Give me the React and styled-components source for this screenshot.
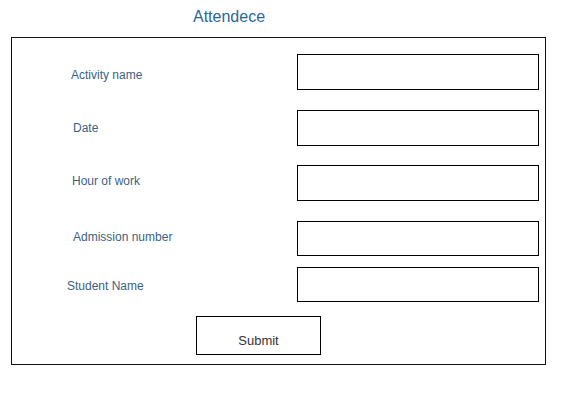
import React from 'react';
import styled, { createGlobalStyle } from 'styled-components';

const GlobalStyle = createGlobalStyle`
  body {
    margin: 0;
    background: #fff;
    font-family: "Liberation Sans", Arial, sans-serif;
  }
`;

const Page = styled.div`
  padding-left: 11px;
  width: 571px;
  height: 412px;
  box-sizing: border-box;
`;

const Title = styled.h1`
  margin: 8px 0 11px;
  padding-left: 182px;
  font-size: 16px;
  line-height: 18px;
  font-weight: normal;
  color: #2b6699;
`;

const Frame = styled.form`
  width: 535px;
  height: 328px;
  box-sizing: border-box;
  border: 1px solid #111;
  padding-top: 16px;
  display: flex;
  flex-direction: column;
`;

const Row = styled.div`
  display: flex;
  align-items: flex-start;
  margin-top: ${props => props.$gap}px;
`;

const Label = styled.label`
  width: 285px;
  box-sizing: border-box;
  padding-left: ${props => props.$x}px;
  padding-top: ${props => props.$y}px;
  font-size: 12px;
  line-height: 14px;
  color: #3b5f86;
`;

const Field = styled.input`
  width: 242px;
  height: ${props => props.$h}px;
  box-sizing: border-box;
  border: 1px solid #000;
  margin: 0;
  padding: 0 6px;
  background: #fff;
  font: inherit;
  outline: none;
`;

const Submit = styled.button`
  margin: 14px 0 0 184px;
  width: 125px;
  height: 39px;
  box-sizing: border-box;
  border: 1px solid #000;
  background: #fff;
  padding: 10px 0 0;
  font-family: "Liberation Sans", Arial, sans-serif;
  font-size: 13px;
  color: #333;
  cursor: pointer;
`;

const fields = [
  { name: 'Activity name', gap: 0, h: 36, x: 59, y: 14 },
  { name: 'Date', gap: 20, h: 36, x: 61, y: 11 },
  { name: 'Hour of work', gap: 19, h: 36, x: 60, y: 9 },
  { name: 'Admission number', gap: 20, h: 35, x: 61, y: 9 },
  { name: 'Student Name', gap: 11, h: 35, x: 55, y: 12 },
];

export default function App() {
  return (
    <Page>
      <GlobalStyle />
      <Title>Attendece</Title>
      <Frame onSubmit={e => e.preventDefault()}>
        {fields.map(f => (
          <Row key={f.name} $gap={f.gap}>
            <Label $x={f.x} $y={f.y}>{f.name}</Label>
            <Field $h={f.h} />
          </Row>
        ))}
        <Submit type="submit">Submit</Submit>
      </Frame>
    </Page>
  );
}
